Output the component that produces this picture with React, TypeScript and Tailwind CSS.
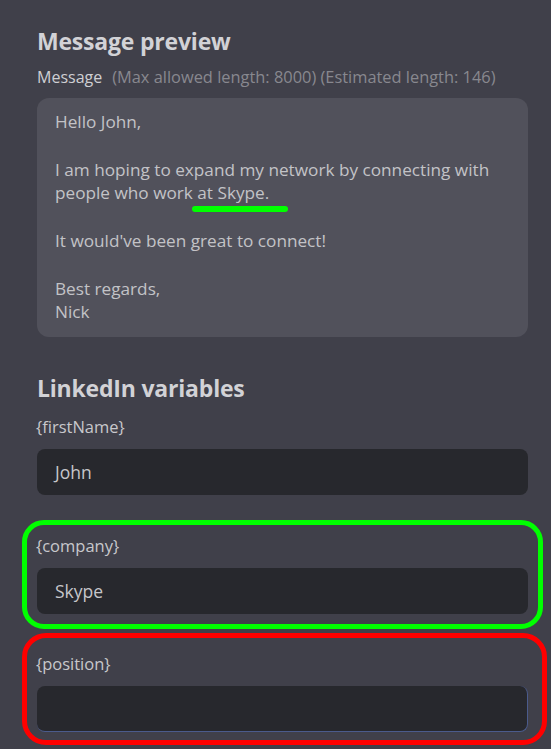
import React from "react";

const font = { fontFamily: '"Open Sans", "Noto Sans", sans-serif' };

const lines = [
  "Hello John,",
  "",
  "I am hoping to expand my network by connecting with",
  "people who work at Skype.",
  "",
  "It would've been great to connect!",
  "",
  "Best regards,",
  "Nick",
];

function Field({ label, value, focused = false }: { label: string; value: string; focused?: boolean }) {
  return (
    <div className="flex flex-col">
      <label className="text-[16.5px] leading-5 text-[#c8c8cc] -ml-px">{label}</label>
      <div
        className={`mt-[12px] h-[46px] rounded-lg bg-[#27282d] px-[18px] flex items-center text-[17.5px] text-[#c6c6ca] ${
          focused ? "border-b border-r border-[#4b5b8c]" : ""
        }`}
      >
        {value}
      </div>
    </div>
  );
}

export default function App() {
  return (
    <div className="min-h-[749px] w-[551px] bg-[#40404a] overflow-hidden" style={font}>
      <div className="px-[37px] w-[528px] box-content pr-0 pt-[27px]">
        <h2 className="text-[23px] leading-7 font-bold text-[#d2d2d6] tracking-[-0.2px]">Message preview</h2>

        <div className="mt-[12px] flex items-center gap-[10px] leading-5 whitespace-nowrap">
          <span className="text-[16px] text-[#cfcfd3]">Message</span>
          <span className="text-[#88888f] text-[16.4px]">(Max allowed length: 8000) (Estimated length: 146)</span>
        </div>

        <div className="relative mt-[11px] h-[239px] w-[491px] rounded-xl bg-[#51515b] px-[18px] pt-[12px] text-[17.2px] leading-[23.8px] text-[#c3c3c7]">
          {lines.map((l, i) => (
            <div key={i} className="whitespace-nowrap h-[23.8px]">
              {l}
            </div>
          ))}
          <div className="absolute left-[155px] top-[108px] h-[6px] w-[96px] rounded-full bg-[#00ff00]" />
        </div>

        <h2 className="mt-[37px] text-[23px] leading-7 font-bold text-[#d2d2d6] tracking-[-0.2px]">LinkedIn variables</h2>

        <div className="mt-[15px] w-[491px]">
          <Field label="{firstName}" value="John" />
        </div>

        <div className="mt-[25px] -ml-[15px] w-[521px] rounded-[22px] border-[5px] border-[#00ff00] px-[10px] pt-[11px] pb-[10px]">
          <Field label="{company}" value="Skype" />
        </div>

        <div className="mt-[4px] -ml-[15px] w-[525px] rounded-[24px] border-[5px] border-[#ff0000] pl-[10px] pr-[14px] pt-[16px] pb-[8px]">
          <Field label="{position}" value="" focused />
        </div>
      </div>
    </div>
  );
}
